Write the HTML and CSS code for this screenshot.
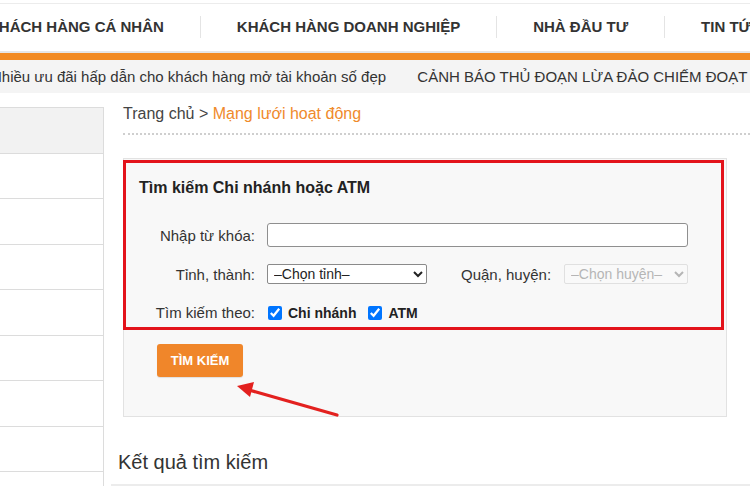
FILE: index.html
```
<!DOCTYPE html>
<html lang="vi">
<head>
    <meta charset="UTF-8">
    <title>Mạng lưới hoạt động</title>
    <link rel="stylesheet" href="styles.css">
</head>
<body>
    <div class="topnav">
        <ul>
            <li>KHÁCH HÀNG CÁ NHÂN</li>
            <li>KHÁCH HÀNG DOANH NGHIỆP</li>
            <li>NHÀ ĐẦU TƯ</li>
            <li>TIN TỨC</li>
        </ul>
    </div>
    <div class="ticker">
        <span>Nhiều ưu đãi hấp dẫn cho khách hàng mở tài khoản số đẹp</span>
        <span>CẢNH BÁO THỦ ĐOẠN LỪA ĐẢO CHIẾM ĐOẠT TÀI SẢN</span>
    </div>
    <div class="main">
        <ul class="sidebar">
            <li class="active"></li>
            <li></li><li></li><li></li><li></li><li></li><li></li><li></li>
        </ul>
        <div class="content">
            <div class="crumb">Trang chủ &gt; <a>Mạng lưới hoạt động</a></div>
            <div class="panel">
                <div class="mark">
                    <h3>Tìm kiếm Chi nhánh hoặc ATM</h3>
                    <div class="row">
                        <label>Nhập từ khóa:</label>
                        <input type="text" class="kw">
                    </div>
                    <div class="row">
                        <label>Tỉnh, thành:</label>
                        <select class="sel-city"><option>–Chọn tỉnh–</option></select>
                        <label class="lb2">Quận, huyện:</label>
                        <select class="sel-dist" disabled><option>–Chọn huyện–</option></select>
                    </div>
                    <div class="row">
                        <label>Tìm kiếm theo:</label>
                        <span class="chk"><input type="checkbox" checked><b>Chi nhánh</b></span>
                        <span class="chk"><input type="checkbox" checked><b>ATM</b></span>
                    </div>
                </div>
                <button class="btn">TÌM KIẾM</button>
                <svg class="arrow" width="130" height="50" viewBox="100 220 130 50">
                    <line x1="214" y1="257" x2="126" y2="232" stroke="#e3211f" stroke-width="3.2" stroke-linecap="round"/>
                    <polygon points="114,228 131,224 127,239" fill="#e3211f"/>
                </svg>
            </div>
            <div class="result">Kết quả tìm kiếm</div>
        </div>
    </div>
</body>
</html>
```

FILE: styles.css
```
/* page */
body{margin:0; font-family:"Liberation Sans", Arial, sans-serif; color:#333; background:#fff; overflow:hidden;}
ul{list-style:none; margin:0; padding:0;}

.topnav{height:47px; margin-top:3px; border-top:1px solid #ececec; border-bottom:2px solid #e6e6e6; background:#fff; overflow:hidden;}
.topnav ul{display:flex; margin-left:-48px; white-space:nowrap;}
.topnav li{padding:0 36px; margin:12px 0; line-height:22px; font-size:15px; font-weight:bold; color:#333; border-left:1px solid #e4e4e4;}
.topnav li:first-child{border-left:0;}

.ticker{border-top:7px solid #f28a22; height:33px; line-height:33px; background:#f4f4f4; white-space:nowrap; overflow:hidden; font-size:15px; color:#333; margin-left:-9px;}
.ticker span{margin-right:27px;}

.main{display:flex;}
.sidebar{width:103px; margin-top:14px; border-right:1px solid #dcdcdc; border-top:1px solid #dcdcdc;}
.sidebar li{height:44.5px; border-bottom:1px solid #dcdcdc;}
.sidebar li.active{background:#f2f2f2;}

.content{flex:1; padding-left:19px;}
.crumb{font-size:16px; padding-top:12px; padding-bottom:10px; border-bottom:2px dotted #cfcfcf; color:#444;}
.crumb a{color:#ef8a2b;}

.panel{position:relative; width:602px; margin-top:23px; background:#f8f8f8; border:1px solid #e2e2e2; padding-bottom:39px;}
.mark{margin:1px 2px 0 -1px; border:3px solid #e3131b; padding:15px 0 6px 13px; }
.mark h3{margin:0 0 25px; font-size:16px; line-height:20px; color:#222;}
.row{display:flex; align-items:center; font-size:15px; margin-bottom:17px;}
.row label{width:116px; text-align:right; margin-right:12px;}
.kw{width:421px; height:24px; box-sizing:border-box; border:1px solid #8f8f8f; border-radius:3px; padding:0; background:#fff;}
.row select{height:20px; font-family:"Liberation Sans", Arial, sans-serif; font-size:14px; border:1px solid #8a8a8a; border-radius:2px; background:#fff; color:#222; padding:0 2px;}
.sel-city{width:160px;}
.row .lb2{width:auto; margin-left:34px; margin-right:13px;}
.sel-dist{width:124px;}
.row select:disabled{color:#999; border-color:#d6d6d6; background:#fafafa;}
.chk{display:flex; align-items:center; margin-right:11px;}
.chk input{width:14px; height:14px; margin:0 6px 0 1px;}
.chk b{font-size:14px; color:#222;}
.row:nth-child(3){margin-bottom:20px;}
.row:last-child{margin-bottom:0;}

.btn{display:block; margin:14px 0 0 33px; width:86px; height:33px; border:0; border-radius:3px; background:#f0862a; color:#fff; font-family:"Liberation Sans", Arial, sans-serif; font-size:13px; font-weight:bold; padding:0; box-shadow:0 1px 1px rgba(0,0,0,0.1);}

.arrow{position:absolute; left:99px; top:219px;}

.result{margin-left:-12px; margin-top:34px; padding:0 0 10px 7px; font-size:20px; color:#333; border-bottom:2px solid #ececec;}
```
